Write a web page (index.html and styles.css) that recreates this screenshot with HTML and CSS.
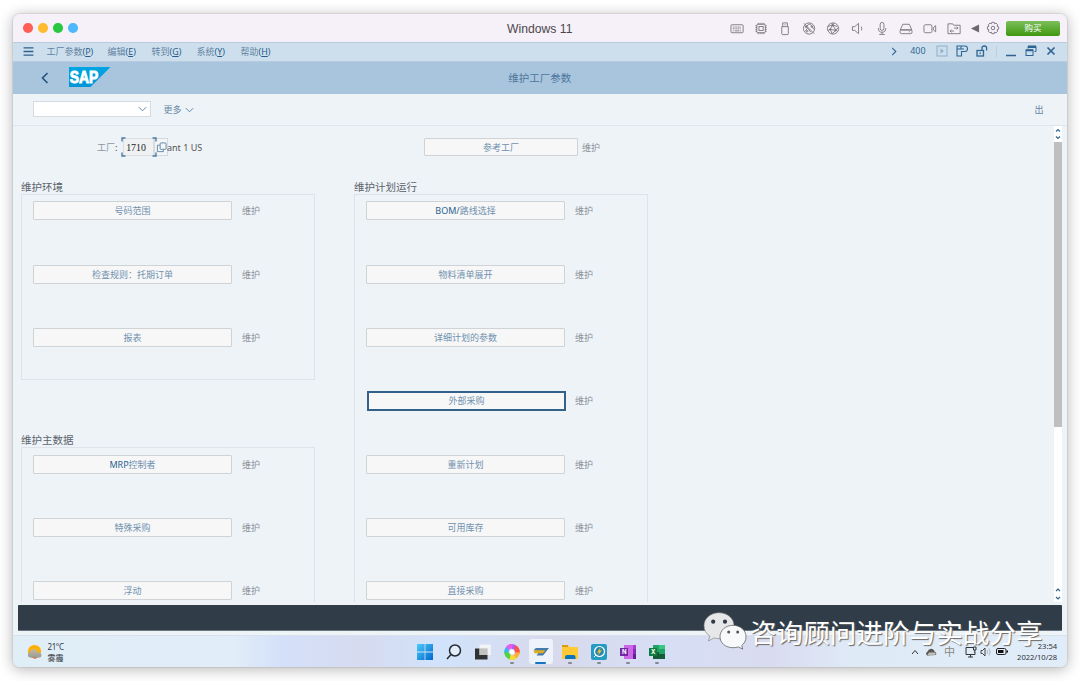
FILE: index.html
```html
<!DOCTYPE html>
<html lang="zh-CN">
<head>
<meta charset="utf-8">
<title>Windows 11</title>
<link rel="stylesheet" href="styles.css">
</head>
<body>
<div class="window">
  <header class="titlebar">
    <div class="lights"><i class="red"></i><i class="yellow"></i><i class="green"></i><i class="blue"></i></div>
    <h1 class="vm-title">Windows 11</h1>
    <div class="vm-icons">
      <svg viewBox="0 0 16 16"><rect x="1.5" y="4" width="13" height="8.5" rx="1"/><path d="M3.5 6.5h9M3.5 8.3h9" stroke-dasharray="1.2 .6"/><path d="M3.5 10.5h1M5.5 10.5h5M11.5 10.5h1"/></svg>
      <svg viewBox="0 0 16 16"><rect x="3.5" y="3.5" width="9" height="9" rx="1"/><rect x="5.8" y="5.8" width="4.4" height="4.4"/><path d="M5 3.500V2M7 3.500V2M9 3.500V2M11 3.500V2M5 14v-1.500M7 14v-1.500M9 14v-1.500M11 14v-1.500M2 5h1.500M2 7h1.500M2 9h1.500M2 11h1.500M12.500 5H14M12.500 7H14M12.500 9H14M12.500 11H14"/></svg>
      <svg viewBox="0 0 16 16"><path d="M5.500 6V2h5v4M4.500 6h7v7.500a1 1 0 0 1-1 1h-5a1 1 0 0 1-1-1zM7 4h.6M8.600 4h.6"/></svg>
      <svg viewBox="0 0 16 16"><circle cx="8" cy="8" r="6"/><path d="M2.500 2.500l11 11M4 7l4-4 3 2 2 4M5 6l5 6M4 11l2-3"/><circle cx="5" cy="6" r=".8"/><circle cx="11" cy="6" r=".8"/><circle cx="6" cy="11" r=".8"/></svg>
      <svg viewBox="0 0 16 16"><circle cx="8" cy="8" r="6"/><path d="M2.500 6l5-2 5 2M7.500 4L5 9l2 4.500M7.500 4l3.500 6-4 3.500M5 9l6 1 2.500-3M2.500 10l2.500-1M8 2v2"/><circle cx="7.500" cy="4.500" r=".7"/><circle cx="11" cy="10" r=".8"/><circle cx="5" cy="9" r=".7"/></svg>
      <svg viewBox="0 0 16 16"><path d="M2 6h2.500l4-3.500v11L4.500 10H2zM11.500 6q1 2 0 4"/></svg>
      <svg viewBox="0 0 16 16"><rect x="6" y="1.500" width="4" height="8.500" rx="2"/><path d="M4 7.500q0 4.500 4 4.500t4-4.500M8 12v2M5 14.300h6"/></svg>
      <svg viewBox="0 0 16 16"><path d="M4.500 3.500h7l2.700 6H1.800zM3 9.500h10q1.500 0 1.500 2T13 13.500H3q-1.500 0-1.500-2T3 9.500M11 11.500h1"/></svg>
      <svg viewBox="0 0 16 16"><rect x="1.500" y="4" width="8.500" height="8.500" rx="1.500"/><path d="M11.500 7l2.500-2v6.500l-2.500-2z"/></svg>
      <svg viewBox="0 0 16 16"><path d="M1.500 3h5l1 1.500h7v9h-13zM8 7.500h4M10.800 6l1.500 1.500-1.500 1.500M8 10.700H4M5.200 9.200l-1.500 1.500L5.200 12.200"/></svg>
    </div>
    <svg class="tri" viewBox="0 0 10 10"><path d="M9.500 .5v9L.5 5z"/></svg>
    <svg class="gear" viewBox="0 0 16 16"><path d="M6.700 1.500h2.600l.5 1.700 1.700-.8 1.900 1.900-.8 1.700 1.800.6v2.700l-1.800.6.8 1.700-1.900 1.900-1.700-.8-.5 1.800H6.700l-.5-1.800-1.700.8-1.900-1.900.8-1.700-1.800-.6V6.600L3.400 6l-.8-1.700 1.900-1.900 1.700.8z"/><circle cx="8" cy="8" r="2"/></svg>
    <button class="buy">购买</button>
  </header>

  <nav class="menubar">
    <svg class="burger" viewBox="0 0 11 10"><path d="M0 1h11M0 5h11M0 9h11"/></svg>
    <ul class="menus">
      <li>工厂参数<b>(<u>P</u>)</b></li><li>编辑<b>(<u>E</u>)</b></li><li>转到<b>(<u>G</u>)</b></li><li>系统<b>(<u>Y</u>)</b></li><li>帮助<b>(<u>H</u>)</b></li>
    </ul>
    <div class="session">
      <svg class="next" viewBox="0 0 6 10"><path d="M1 1l4 4-4 4"/></svg>
      <span class="client">400</span>
      <svg class="play" viewBox="0 0 12 12"><rect x="1" y="1" width="10" height="10"/><path d="M4.500 3.500v5L8 6z" fill="#8fafc9" stroke="none"/></svg>
      <svg class="gui" viewBox="0 0 12 12"><path d="M1 1h8q2.500 0 2.500 2.700T9 6.500H5.500V11H1zM5 1v3M1 4h4M8 4H5"/></svg>
      <svg class="lock" viewBox="0 0 12 12"><rect x="1" y="5.500" width="6.500" height="5.500"/><path d="M6 5.500V3q0-2 2.300-2t2.300 2v2.500M4.200 7.500v1.500"/></svg>
      <i class="sep"></i>
      <svg class="min" viewBox="0 0 12 12"><path d="M1 10.500h10"/></svg>
      <svg class="restore" viewBox="0 0 12 12"><path d="M3 3.500V1.500h8v5H9.500" /><path d="M3 1.700h8" stroke-width="2.400"/><rect x="1" y="5" width="7" height="5.500"/><path d="M1 5.200h7" stroke-width="2"/></svg>
      <svg class="close" viewBox="0 0 12 12"><path d="M2.500 2.500l7 7M9.500 2.500l-7 7"/></svg>
    </div>
  </nav>

  <div class="apphead">
    <svg class="back" viewBox="0 0 8 12"><path d="M6.500 1L1.500 6l5 5"/></svg>
    <svg class="sap" viewBox="0 0 42 20"><defs><linearGradient id="sapBlue" x1="0" y1="0" x2="0" y2="1"><stop offset="0" stop-color="#00a5e3"/><stop offset="1" stop-color="#0095d6"/></linearGradient></defs><path d="M0 0h41.500L21.500 20H0z" fill="url(#sapBlue)"/><text x="0.800" y="15.500" textLength="28.500" lengthAdjust="spacingAndGlyphs">SAP</text></svg>
    <h2 class="screen-title">维护工厂参数</h2>
  </div>

  <div class="toolbar">
    <div class="command"><svg viewBox="0 0 10 6"><path d="M1 1l4 4 4-4"/></svg></div>
    <span class="more">更多</span>
    <svg class="chev" viewBox="0 0 10 6"><path d="M1 1l4 4 4-4"/></svg>
    <span class="exit">出</span>
  </div>

  <main class="content">
    <div class="form">
      <div class="plant">
        <div class="plant-left">
          <label class="plant-label">工厂<b>:</b></label>
          <div class="field">1710<svg class="corners" viewBox="0 0 36 20"><path d="M1 4.500V1h3.500M31.500 1H35v3.500M35 15.500V19h-3.500M4.500 19H1v-3.500"/></svg></div>
          <div class="match"><svg viewBox="0 0 12 12"><path d="M4 3.500H1.500v7H8V8.500"/><rect x="4.500" y="1" width="6.500" height="7" rx="1"/></svg></div>
          <span class="plant-name">ant 1 US</span>
        </div>
        <button class="btn ref">参考工厂</button><span class="note tight">维护</span>
      </div>
      <div class="columns">
        <div class="column">
          <section class="group env"><h3>维护环境</h3>
            <div class="box">
              <div class="row"><button class="btn">号码范围</button><span class="note">维护</span></div>
              <div class="row"><button class="btn">检查规则：托期订单</button><span class="note">维护</span></div>
              <div class="row"><button class="btn">报表</button><span class="note">维护</span></div>
            </div>
          </section>
          <section class="group"><h3>维护主数据</h3>
            <div class="box tall">
              <div class="row"><button class="btn"><b>MRP</b>控制者</button><span class="note">维护</span></div>
              <div class="row"><button class="btn">特殊采购</button><span class="note">维护</span></div>
              <div class="row"><button class="btn">浮动</button><span class="note">维护</span></div>
            </div>
          </section>
        </div>
        <div class="column">
          <section class="group"><h3>维护计划运行</h3>
            <div class="box tall">
              <div class="row"><button class="btn"><b>BOM/</b>路线选择</button><span class="note">维护</span></div>
              <div class="row"><button class="btn">物料清单展开</button><span class="note">维护</span></div>
              <div class="row"><button class="btn">详细计划的参数</button><span class="note">维护</span></div>
              <div class="row"><button class="btn focus">外部采购</button><span class="note">维护</span></div>
              <div class="row"><button class="btn">重新计划</button><span class="note">维护</span></div>
              <div class="row"><button class="btn">可用库存</button><span class="note">维护</span></div>
              <div class="row"><button class="btn">直接采购</button><span class="note">维护</span></div>
            </div>
          </section>
        </div>
      </div>
    </div>
    <div class="scroll">
      <svg viewBox="0 0 8 16"><path d="M2 5.500L4 3.500l2 2M2 10.500l2 2 2-2"/></svg>
      <div class="thumb"></div>
      <div class="track"></div>
      <svg class="down" viewBox="0 0 8 22"><path d="M2 11L4 9l2 2M2 17l2 2 2-2"/></svg>
    </div>
  </main>

  <div class="statusbar"><div class="status"></div></div>

  <footer class="taskbar">
    <div class="weather">
      <svg viewBox="0 0 16 16"><defs><linearGradient id="cloud" x1="0" y1="0" x2="0" y2="1"><stop offset="0" stop-color="#c5bb9d"/><stop offset="1" stop-color="#989b9c"/></linearGradient></defs><circle cx="8.500" cy="7.500" r="6.600" fill="#ffb000"/><path d="M5 13h7l-3 2z" fill="#e66d20"/><path d="M3.500 13.500a3 3 0 0 1 .3-5.500Q5 4.500 8 5t3.800 3.200q3.500.2 3.700 2.800t-3 2.600z" fill="url(#cloud)"/></svg>
      <div class="temps"><span>21°C</span><span>雾霾</span></div>
    </div>
    <div class="apps">
      <span class="app"><svg viewBox="0 0 16 16"><defs><linearGradient id="win" x1="0" y1="0" x2="1" y2="1"><stop offset="0" stop-color="#4cc9fa"/><stop offset="1" stop-color="#0069cc"/></linearGradient></defs><path d="M0 0h7.600v7.600H0zM8.400 0H16v7.600H8.400zM0 8.400h7.600V16H0zM8.400 8.400H16V16H8.400z" fill="url(#win)"/></svg></span>
      <span class="app"><svg viewBox="0 0 16 16" fill="none" stroke="#252a30" stroke-width="1.500"><circle cx="9" cy="6.500" r="5.500" fill="#e3eefb"/><path d="M5 10.500L1 15"/></svg></span>
      <span class="app"><svg viewBox="0 0 16 16"><path d="M0 4.500h12.500v11H0z" fill="#303234"/><path d="M4.500.5h11.300V11H4.500z" fill="#f7f7f7" opacity=".85"/><path d="M4.500 4.500h8V11h-8z" fill="#c2c2c2"/></svg></span>
      <span class="app run"><svg viewBox="0 0 16 16"><path d="M3 2Q7-1.500 12 1.500L11 6 7.500 4.500z" fill="#a65cff"/><path d="M11 1q5 2 5 8l-3 2-2.500-4z" fill="#ff5148"/><path d="M15.800 8q-.5 5-5 7.500l-2-3L12 8.500z" fill="#ffae36"/><path d="M12.500 14.500q-4 3-8.500 0l2-3.500 4 .5z" fill="#f4dc35"/><path d="M5.500 15.500Q0 13 .2 8l3-1.500L6.500 11z" fill="#55d23d"/><path d="M.2 9Q0 4 4 1.200L6 3.500 4.500 8z" fill="#30b9e9"/><path d="M2 3Q5-.5 9 .2L8 4 4.500 6z" fill="#e95af0"/><circle cx="8" cy="8" r="2.200" fill="#fff"/></svg></span>
      <span class="app run active"><svg viewBox="0 0 16 16"><path d="M3 4h13l-6 7.500H3.500L5 9.500l-4-4z" fill="#457ba8"/><path d="M.3 6.300h12L10 9.200H1.500z" fill="#e3ad22"/></svg></span>
      <span class="app run"><svg viewBox="0 0 16 16"><path d="M0 1h6l1.500 2H16v12H0z" fill="#ffca35"/><path d="M0 1h6v2H0z" fill="#d99b13"/><path d="M3 15v-2q0-2 2-2h6.500q2 0 2 2v2z" fill="#0875bd"/></svg></span>
      <span class="app run"><svg viewBox="0 0 16 16"><rect width="16" height="16" rx="2" fill="#249bc2"/><circle cx="8.500" cy="7.500" r="5" fill="#2488ad" stroke="#fff" stroke-width="1.200"/><path d="M5 11l-2 2" stroke="#fff"/><path d="M9.500 3.500L6 8.500h2l-1 3 4-5H9z" fill="#f4bd35"/></svg></span>
      <span class="app run"><svg viewBox="0 0 16 16"><path d="M4 1h12v14H4z" fill="#cc67e8"/><path d="M13 1h3v4h-3z" fill="#a63bd1"/><path d="M13 5h3v5h-3z" fill="#812fb4"/><path d="M13 10h3v5h-3z" fill="#612093"/><path d="M0 4h8v8H0z" fill="#7327a4"/><text x="2" y="10.300">N</text></svg></span>
      <span class="app run"><svg viewBox="0 0 16 16"><path d="M4 1h12v14H4z" fill="#21a366"/><path d="M10 1h6v4h-6z" fill="#38c681"/><path d="M4 8h6v7H4zM10 10h6v5h-6z" fill="#145c37"/><path d="M0 4h8v8H0z" fill="#107c41"/><text x="2" y="10.300">X</text></svg></span>
    </div>
    <div class="tray">
      <svg class="up" viewBox="0 0 8 6"><path d="M1 5l3-3.500L7 5" fill="none" stroke="#333"/></svg>
      <svg class="cloud" viewBox="0 0 12 10"><path d="M2 8.500q-2-2 .500-4Q4 1 7.500 2q2 1 2 2.500Q12 5.500 11 8z" fill="#5b5755"/><path d="M2.500 8L4 5.500h6.500v2.300z" fill="#c6c2bf"/></svg>
      <span class="ime">中</span>
      <svg class="net" viewBox="0 0 12 12" fill="none" stroke="#333"><path d="M8 1.500H1v7h9V6.500M3 11h5M5.500 8.500V11M8.500 1h2.500v3H8.500zM9.800 4v3"/></svg>
      <svg class="vol" viewBox="0 0 12 12" fill="none" stroke="#444"><path d="M1 4.500h1.500L5 2v8L2.500 7.500H1z"/><path d="M7 4q1.500 2 0 4M9 2.500q2.500 3.500 0 7" stroke="#aeb8c3"/></svg>
      <svg class="bat" viewBox="0 0 12 8"><rect x=".5" y="1" width="9.500" height="6" rx="1.500" fill="none" stroke="#222"/><path d="M2 2.500h5.500v3H2zM10.500 3H12v2h-1.500z" fill="#111"/></svg>
      <div class="clock"><span>23:54</span><span>2022/10/28</span></div>
    </div>
  </footer>
</div>

<div class="watermark">
  <svg viewBox="0 0 44 38"><path d="M16 .7c8.400 0 15 5.600 15 13s-6.600 13-15 13q-2.500 0-5-.8L5.500 29l1.300-5Q1 20.500 1 13.700C1 6.300 7.600.7 16 .7z" fill="#e6e7e8" stroke="#777" stroke-width=".6"/><circle cx="10.200" cy="9.700" r="2.100" fill="#303b46"/><circle cx="22" cy="9.700" r="2.100" fill="#303b46"/><path d="M30 13.300c7.300 0 13 5 13 11.500 0 4-1.800 6.700-4.300 8.700l1 3.600-4.400-2.200q-2.500.8-5.300.8c-7.300 0-13-4.600-13-11s5.700-11.400 13-11.400z" fill="#f8f9fa" stroke="#555" stroke-width=".7"/><circle cx="25.700" cy="20" r="1.500" fill="#555"/><circle cx="34.700" cy="20" r="1.500" fill="#555"/></svg>
  <span>咨询顾问进阶与实战分享</span>
</div>
</body>
</html>
```

FILE: styles.css
```css
* { box-sizing: border-box; }
body {
  margin: 0; width: 1080px; height: 681px; overflow: hidden; background: #fff;
  font-family: "Noto Sans", "Noto Sans CJK SC", sans-serif; font-size: 9px; color: #5b6670;
}
h1, h2, h3, ul { margin: 0; padding: 0; font-weight: 400; }
b { font-weight: 400; }
svg { display: block; fill: none; flex: none; }
button { font: inherit; padding: 0; margin: 0; }

.window {
  width: 1053.5px; height: 653px; margin: 14px 0 0 13px; border-radius: 7px; overflow: hidden;
  display: flex; flex-direction: column; background: #eef3f8;
  box-shadow: 0 0 1px 1px rgba(0,0,0,.07), 0 2px 14px 1px rgba(0,0,0,.27);
}

/* host window title bar */
.titlebar { height: 28px; flex: none; display: flex; align-items: center; background: #f6f0f8; padding: 0 6.5px 0 10px; position: relative; }
.lights { display: flex; gap: 5.600px; }
.lights i { width: 9.500px; height: 9.500px; border-radius: 50%; }
.red { background: #ff5f57; } .yellow { background: #febc2e; } .green { background: #28c840; } .blue { background: #4db8fa; }
.vm-title { position: absolute; left: 0; right: 0; top: 7px; text-align: center; font: 12.200px/17px "Liberation Sans", sans-serif; color: #4b484c; }
.vm-icons { margin-left: auto; display: flex; }
.vm-icons svg { width: 24.100px; height: 15px; stroke: #736d76; stroke-width: .9; }
.tri { width: 10px; height: 9px; margin: 0 4px 0 3.500px; fill: #6d6870; }
.gear { width: 14px; height: 14px; margin: 0 6.500px 0 2px; stroke: #736d76; stroke-width: 1; }
.buy { width: 54px; height: 15px; border: 0; border-radius: 2px; background: linear-gradient(#7cbf5c, #3f970f); color: #fff; font-size: 8.500px; line-height: 13px; padding-bottom: 2px; }

/* menu bar */
.menubar { height: 20px; flex: none; display: flex; align-items: center; background: #cddfed; border-top: 1px solid #b9cbdc; border-bottom: 1px solid #b6cbde; padding: 0 10px 1px; color: #6384a2; }
.burger { width: 11px; height: 9px; stroke: #2f5f8d; stroke-width: 1.400; }
.menus { list-style: none; display: grid; grid-template-columns: 61px 44px 45px 44px 50px; margin-left: 12.500px; line-height: 16px; }
.menus b { color: #285b8a; font-size: 8.900px; }
.session { margin-left: auto; display: flex; align-items: center; stroke: #2f6493; color: #2f6493; padding-bottom: 1px; }
.next { width: 6px; height: 9px; margin-right: 13.500px; stroke-width: 1.200; }
.client { margin-right: 10px; line-height: 16px; font-size: 8.900px; }
.play { width: 12px; height: 12px; margin-right: 8px; stroke: #8fafc9; }
.gui { width: 12px; height: 12px; margin-right: 8px; stroke-width: 1.100; }
.lock { width: 12px; height: 12px; margin-right: 8px; stroke-width: 1.300; }
.sep { width: 1px; height: 11px; background: #bccddc; margin-right: 8px; }
.min { width: 12px; height: 12px; margin-right: 8px; stroke-width: 1.500; }
.restore { width: 12px; height: 12px; margin-right: 8px; }
.close { width: 12px; height: 12px; stroke-width: 1.700; }

/* application header */
.apphead { height: 32px; flex: none; display: flex; align-items: center; background: #a9c5de; padding-left: 28px; position: relative; }
.back { width: 8px; height: 12px; stroke: #24527d; stroke-width: 1.600; }
.sap { width: 42px; height: 20px; margin: -2px 0 0 20px; }
.sap text { font: 700 16px "Liberation Sans", sans-serif; fill: #fff; stroke: #fff; stroke-width: .9; }
.screen-title { position: absolute; left: 0; right: 0; top: 8px; text-align: center; font-size: 10.500px; line-height: 16px; color: #4d769b; }

.toolbar { height: 32px; flex: none; display: flex; align-items: center; border-bottom: 1px solid #dde6ee; padding: 0 23px 0 20px; color: #6685a3; }
.command { width: 118px; height: 16px; margin-top: -1px; background: #fff; border: 1px solid #d5dbe0; display: flex; align-items: center; justify-content: flex-end; padding-right: 3px; }
.command svg, .chev { width: 9px; height: 6px; stroke: #4d7ca6; }
.more { margin: 0 3px 0 12.500px; }
.exit { margin-left: auto; }

/* form */
.content { height: 476px; flex: none; display: flex; padding-right: 4.500px; }
.form { flex: 1; overflow: hidden; padding: 12px 0 0 8px; }
.plant { display: flex; align-items: center; height: 18px; }
.plant-left { display: flex; align-items: center; width: 403px; padding-left: 76px; }
.plant-label { width: 26px; color: #8d969e; line-height: 18px; padding-top: 1px; }
.plant-label b { color: #333; }
.field { position: relative; width: 31px; height: 18px; background: #f0f1f2; border: 1px solid #dcdfe1; text-align: center; padding-right: 5px; font: 9.900px/17px "Liberation Serif", serif; color: #222; }
.corners { position: absolute; left: -3px; top: -2px; width: 36px; height: 20px; stroke: #4f7ba4; stroke-width: 1.400; }
.match { width: 14px; height: 18px; border: 1px solid #d6d9dc; background: #f3f5f7; display: flex; align-items: center; justify-content: center; }
.match svg { width: 11px; height: 11px; stroke: #5a82a6; }
.plant-name { margin-left: -1px; font-size: 9px; color: #555; line-height: 18px; padding-top: 1px; }
.btn { width: 199px; height: 19px; flex: none; border: 1px solid #cfd3d6; border-radius: 1px; background: #f7f7f7; color: #7091b0; font-size: 9px; line-height: 17px; text-align: center; }
.btn b { color: #2c628f; }
.btn.ref { width: 154px; height: 18px; }
.btn.focus { border: 2px solid #346189; margin-left: 1px; width: 199px; margin-right: -1px; height: 20px; border-radius: 0; line-height: 14px; padding-bottom: 1px; }
.note { margin-left: 10px; line-height: 18px; padding-top: 1px; color: #8b9299; }
.note.tight { margin-left: 4px; }
.columns { display: flex; gap: 39px; padding-top: 22px; }
.column { width: 294px; flex: none; }
.group h3 { height: 16px; line-height: 18px; font-size: 10.500px; color: #5b636b; }
.box { border: 1px solid #dde3e9; padding: 6.300px 0 0 11px; height: 186px; }
.env { height: 253.300px; }
.box.tall { height: 500px; }
.row { height: 63.330px; display: flex; align-items: flex-start; }

.scroll { width: 8px; display: flex; flex-direction: column; }
.scroll svg { width: 8px; height: 16px; background: #fff; stroke: #2f6493; stroke-width: 1.200; }
.scroll .down { height: 22px; }
.thumb { height: 285px; background: #bfbfbf; }
.track { flex: 1; background: #fff; }

.statusbar { height: 34px; flex: none; padding: 3px 4.500px 5px 5px; border-bottom: 1px solid #d7e2ed; }
.status { height: 26px; background: #303c48; border-radius: 1px; border-bottom: 1px solid #687681; }

/* guest taskbar */
.taskbar {
  height: 31px; flex: none; display: grid; grid-template-columns: 397px 261px 1fr; align-items: stretch;
  background: linear-gradient(90deg, #e0eef8 0, #e1edf8 220px, #d4e0f9 270px, #d6dbf0 350px, #d1e3fb 430px, #d8daec 540px, #d6def5 650px, #d9dcf0 760px, #dfeaf7 840px, #e0edf8 100%);
}
.weather { display: flex; align-items: center; padding-left: 13px; gap: 5.500px; }
.weather svg { width: 16px; height: 16px; }
.temps { display: flex; flex-direction: column; font-size: 8px; line-height: 11px; color: #353a40; }
.temps span:first-child { letter-spacing: -.4px; }
.apps { display: grid; grid-template-columns: repeat(9, 29.100px); }
.app { display: flex; align-items: center; justify-content: center; position: relative; }
.app svg { width: 16px; height: 16px; }
.app text { font: 700 6px Inter, sans-serif; fill: #fff; }
.app.run::after { content: ""; position: absolute; bottom: 3px; left: 12.500px; width: 4px; height: 2px; border-radius: 1px; background: #848891; }
.app.active::before { content: ""; position: absolute; inset: 3px 2px 3px 3px; background: #eef2fb; border-radius: 3px; }
.app.active svg { position: relative; }
.app.run.active::after { left: 9px; width: 11px; background: #1475c5; }
.tray { display: flex; align-items: center; justify-content: flex-end; padding-right: 9.500px; }
.up { width: 8px; height: 6px; margin-right: 6px; }
.cloud { width: 12px; height: 10px; margin-right: 7px; }
.ime { font-size: 11px; line-height: 14px; color: #8b8783; margin-right: 10px; }
.net { width: 12px; height: 12px; margin-right: 3px; }
.vol { width: 12px; height: 12px; margin-right: 4px; }
.bat { width: 12px; height: 9px; margin-right: 9px; }
.clock { display: flex; flex-direction: column; text-align: right; font-size: 7.600px; line-height: 11px; color: #2e3338; width: 40px; white-space: nowrap; letter-spacing: -.05px; }

.watermark { position: absolute; left: 703px; top: 612px; display: flex; align-items: flex-start; }
.watermark svg { width: 44px; height: 38px; }
.watermark span { margin-left: 3px; font: 26.600px/40px "Noto Sans CJK SC", sans-serif; color: #fff; text-shadow: 1px 1px 1px #666; white-space: nowrap; }
```
